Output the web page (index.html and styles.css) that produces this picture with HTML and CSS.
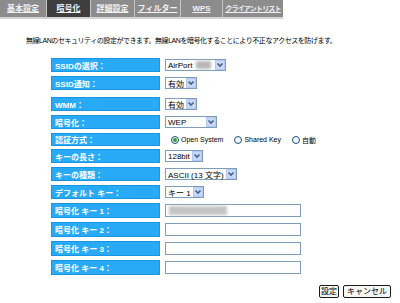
FILE: index.html
```html
<!DOCTYPE html>
<html lang="ja">
<head>
    <meta charset="UTF-8">
    <title>暗号化</title>
    <link rel="stylesheet" href="styles.css">
</head>
<body>
    <div class="tabs">
        <a class="tab w47">基本設定</a>
        <a class="tab w44 active">暗号化</a>
        <a class="tab w44">詳細設定</a>
        <a class="tab w46">フィルター</a>
        <a class="tab w42">WPS</a>
        <a class="tab w60 narrow">クライアントリスト</a>
    </div>

    <p class="intro">無線LANのセキュリティの設定ができます。無線LANを暗号化することにより不正なアクセスを防げます。</p>

    <div class="form">
        <div class="row">
            <div class="label">SSIDの選択：</div>
            <div class="value">
                <div class="select ssid">AirPort<span class="blur"></span><span class="arrow"><svg viewBox="0 0 8 8"><path d="M1.5 2.5 L4 5 L6.5 2.5" /></svg></span></div>
            </div>
        </div>
        <div class="row">
            <div class="label">SSID通知：</div>
            <div class="value">
                <div class="select">有効<span class="arrow"><svg viewBox="0 0 8 8"><path d="M1.5 2.5 L4 5 L6.5 2.5" /></svg></span></div>
            </div>
        </div>
        <div class="row gap">
            <div class="label">WMM：</div>
            <div class="value">
                <div class="select">有効<span class="arrow"><svg viewBox="0 0 8 8"><path d="M1.5 2.5 L4 5 L6.5 2.5" /></svg></span></div>
            </div>
        </div>
        <div class="row">
            <div class="label">暗号化：</div>
            <div class="value">
                <div class="select wep">WEP<span class="arrow"><svg viewBox="0 0 8 8"><path d="M1.5 2.5 L4 5 L6.5 2.5" /></svg></span></div>
            </div>
        </div>
        <div class="row short">
            <div class="label">認証方式：</div>
            <div class="value radios">
                <span class="radio checked"></span><span class="opt">Open System</span>
                <span class="radio"></span><span class="opt">Shared Key</span>
                <span class="radio"></span><span class="opt">自動</span>
            </div>
        </div>
        <div class="row">
            <div class="label">キーの長さ：</div>
            <div class="value">
                <div class="select">128bit<span class="arrow"><svg viewBox="0 0 8 8"><path d="M1.5 2.5 L4 5 L6.5 2.5" /></svg></span></div>
            </div>
        </div>
        <div class="row">
            <div class="label">キーの種類：</div>
            <div class="value">
                <div class="select">ASCII (13 文字)<span class="arrow"><svg viewBox="0 0 8 8"><path d="M1.5 2.5 L4 5 L6.5 2.5" /></svg></span></div>
            </div>
        </div>
        <div class="row">
            <div class="label">デフォルト キー：</div>
            <div class="value">
                <div class="select">キー 1<span class="arrow"><svg viewBox="0 0 8 8"><path d="M1.5 2.5 L4 5 L6.5 2.5" /></svg></span></div>
            </div>
        </div>
        <div class="row tall">
            <div class="label">暗号化 キー 1：</div>
            <div class="value"><div class="text"><span class="blur key"></span></div></div>
        </div>
        <div class="row tall">
            <div class="label">暗号化 キー 2：</div>
            <div class="value"><div class="text"></div></div>
        </div>
        <div class="row tall">
            <div class="label">暗号化 キー 3：</div>
            <div class="value"><div class="text"></div></div>
        </div>
        <div class="row tall">
            <div class="label">暗号化 キー 4：</div>
            <div class="value"><div class="text"></div></div>
        </div>
    </div>

    <div class="actions">
        <button class="btn ok">設定</button>
        <button class="btn">キャンセル</button>
    </div>
</body>
</html>
```

FILE: styles.css
```css
* {
    margin: 0;
    padding: 0;
    box-sizing: border-box;
}

body {
    font-family: "Liberation Sans", "Noto Sans CJK JP", sans-serif;
    font-size: 8px;
    color: #000;
    background: #fff;
    width: 400px;
    height: 303px;
    overflow: hidden;
}

/* tab bar */
.tabs {
    display: flex;
    width: 283px;
    height: 19px;
    overflow: hidden;
    background: #8c8c8c;
    border-bottom: 2px solid #d4d4d4;
}

.tab {
    flex: none;
    height: 17px;
    line-height: 17px;
    text-align: center;
    color: #f2f2f2;
    font-weight: bold;
    text-decoration: underline;
    border-right: 1px solid #c4c4c4;
    white-space: nowrap;
}

.tab:last-child {
    border-right: none;
}

.tab.narrow {
    font-size: 7px;
    letter-spacing: -0.8px;
}

.w42 { width: 42px; }
.w44 { width: 44px; }
.w46 { width: 46px; }
.w47 { width: 47px; }
.w60 { width: 60px; }

.tab.active {
    background: #3e3e3e;
    height: 18px;
}

.intro {
    margin: 17px 0 0 26px;
    font-size: 7px;
    line-height: 9px;
    letter-spacing: -0.45px;
}

/* form rows */
.form {
    margin: 13px 0 0 51px;
    display: flex;
    flex-direction: column;
    gap: 4px;
}

.row {
    display: grid;
    grid-template-columns: 109px 1fr;
    column-gap: 5px;
    height: 14px;
}

.row.gap {
    margin-top: 3px;
}

.row.short {
    height: 12px;
}

.row.tall {
    height: 15px;
}

.label {
    background: #28aaf6;
    border: 1px solid #1896e6;
    color: #fff;
    font-weight: bold;
    padding-left: 3px;
    display: flex;
    align-items: center;
    white-space: nowrap;
}

.value {
    display: flex;
    align-items: center;
}

.select {
    height: 12px;
    display: flex;
    align-items: center;
    gap: 2px;
    border: 1px solid #7f9db9;
    background: #fff;
    padding-left: 2px;
    white-space: nowrap;
}

.select.ssid {
    width: 61px;
    gap: 4px;
}

.select.ssid .arrow {
    margin-left: auto;
}

.select.wep {
    width: 52px;
    justify-content: space-between;
}

.arrow {
    width: 10px;
    height: 10px;
    background: #c7d8fb;
    border: 1px solid #b4c8f6;
    display: flex;
    align-items: center;
    justify-content: center;
}

.arrow svg {
    width: 8px;
    height: 8px;
    fill: none;
    stroke: #4d6185;
    stroke-width: 1.6;
}

.blur {
    display: inline-block;
    width: 22px;
    height: 8px;
    background: #b8b8b8;
    filter: blur(1.5px);
}

.text {
    width: 136px;
    height: 13px;
    border: 1px solid #7f9db9;
    background: #fff;
    display: flex;
    align-items: center;
    padding-left: 3px;
}

.blur.key {
    width: 58px;
    height: 9px;
    background: #c4c4c4;
}

/* radio group */
.radios {
    padding-left: 6px;
    font-size: 7px;
}

.radio {
    width: 8px;
    height: 8px;
    border: 1px solid #1c5180;
    border-radius: 50%;
    background: #f4f4f4;
    margin-right: 2px;
    display: flex;
    align-items: center;
    justify-content: center;
}

.radio.checked::after {
    content: "";
    width: 4px;
    height: 4px;
    border-radius: 50%;
    background: #2ea52e;
}

.opt {
    margin-right: 11px;
}

/* buttons */
.actions {
    display: flex;
    justify-content: flex-end;
    gap: 4px;
    margin: 10px 9px 0 0;
}

.btn {
    font-family: "Liberation Sans", "Noto Sans CJK JP", sans-serif;
    font-size: 8px;
    height: 13px;
    padding: 0 3px;
    border: 1px solid #1a1a1a;
    border-radius: 2px;
    background: #f6f6f2;
    line-height: 11px;
}

.btn.ok {
    padding: 0 1px;
}
```
